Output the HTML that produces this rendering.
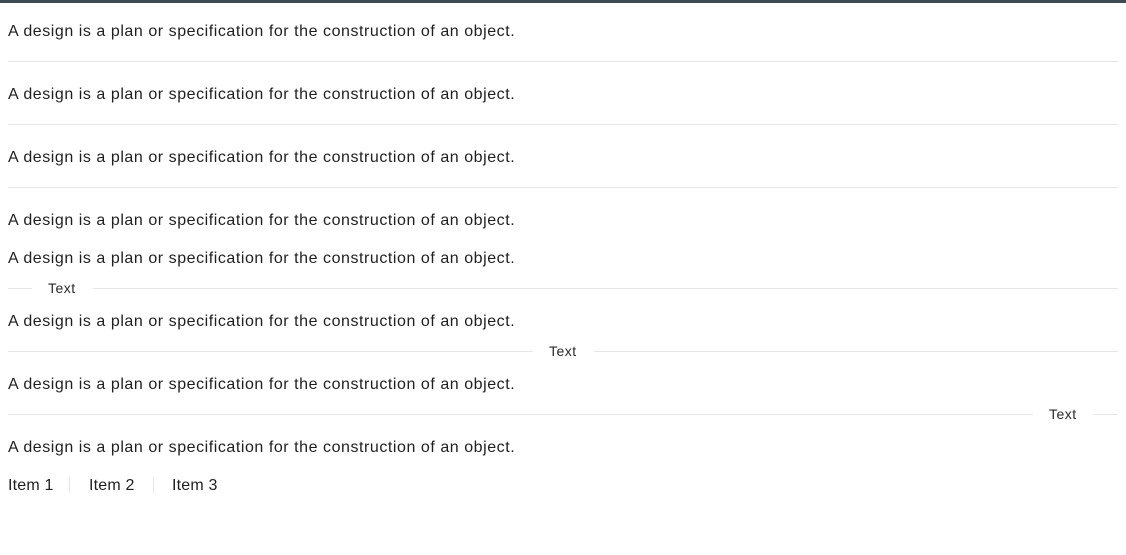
<!DOCTYPE html>
<html><head><meta charset="utf-8"><style>
html,body{margin:0;padding:0;background:#fff;}
body{width:1126px;height:555px;position:relative;overflow:hidden;font-family:"Liberation Sans",Arial,sans-serif;color:#1f1f1f;}
.top{position:absolute;left:0;top:0;width:1126px;height:3px;background:#3d4a52;}
.t{position:absolute;left:8px;font-size:16px;line-height:20px;white-space:nowrap;letter-spacing:0.55px;}
.h{position:absolute;height:1px;background:#e6e6ea;}
.s{position:absolute;font-size:14px;line-height:16px;color:#2a2a2a;white-space:nowrap;letter-spacing:0.5px;}
.v{position:absolute;width:1px;height:16px;background:#e6e6ea;top:477px;}
</style></head><body>
<div class="top"></div>
<div class="t" style="top:22px">A design is a plan or specification for the construction of an object.</div>
<div class="h" style="left:8px;width:1110px;top:61px"></div>
<div class="t" style="top:85px">A design is a plan or specification for the construction of an object.</div>
<div class="h" style="left:8px;width:1110px;top:124px"></div>
<div class="t" style="top:148px">A design is a plan or specification for the construction of an object.</div>
<div class="h" style="left:8px;width:1110px;top:187px"></div>
<div class="t" style="top:211px">A design is a plan or specification for the construction of an object.</div>
<div class="t" style="top:249px">A design is a plan or specification for the construction of an object.</div>
<div class="h" style="left:8px;width:24px;top:288px"></div>
<div class="s" style="left:48px;top:280px">Text</div>
<div class="h" style="left:93px;width:1025px;top:288px"></div>
<div class="t" style="top:312px">A design is a plan or specification for the construction of an object.</div>
<div class="h" style="left:8px;width:525px;top:351px"></div>
<div class="s" style="left:549px;top:343px">Text</div>
<div class="h" style="left:594px;width:524px;top:351px"></div>
<div class="t" style="top:375px">A design is a plan or specification for the construction of an object.</div>
<div class="h" style="left:8px;width:1025px;top:414px"></div>
<div class="s" style="left:1049px;top:406px">Text</div>
<div class="h" style="left:1094px;width:24px;top:414px"></div>
<div class="t" style="top:438px">A design is a plan or specification for the construction of an object.</div>
<div class="t" style="top:476px;left:8px;letter-spacing:0.2px">Item 1</div>
<div class="v" style="left:69px"></div>
<div class="t" style="top:476px;left:89px;letter-spacing:0.2px">Item 2</div>
<div class="v" style="left:153px"></div>
<div class="t" style="top:476px;left:172px;letter-spacing:0.2px">Item 3</div>
</body></html>
